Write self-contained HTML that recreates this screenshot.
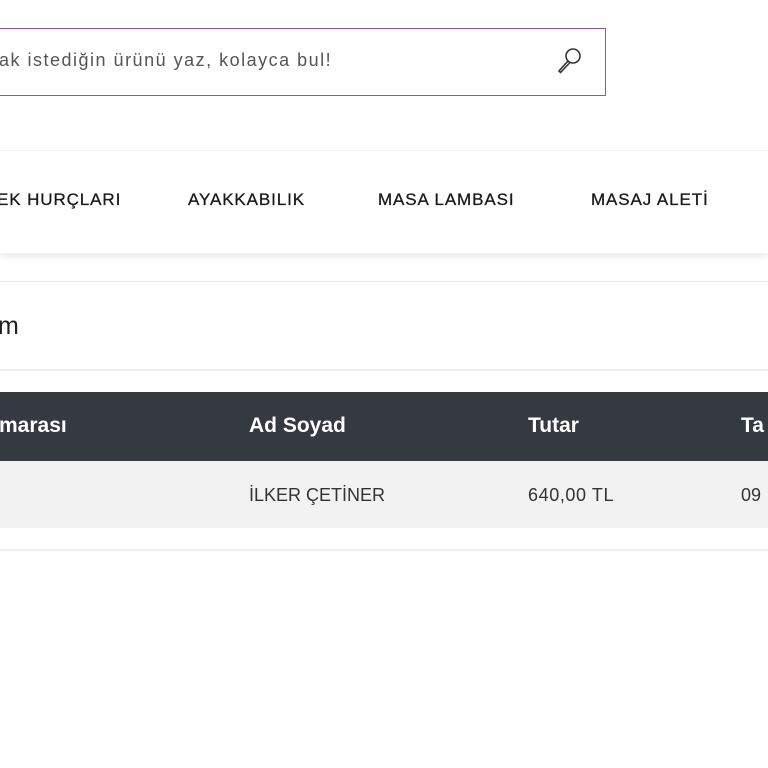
<!DOCTYPE html>
<html><head><meta charset="utf-8"><style>
body{margin:0;width:768px;height:768px;overflow:hidden;background:#fff;font-family:"Liberation Sans",sans-serif;position:relative;color:#222}
.a{position:absolute;white-space:nowrap}
.n{top:190px;font-size:17px;color:#1a1a1a;letter-spacing:0.9px;-webkit-text-stroke:0.3px #1a1a1a}
</style></head><body>
<div class="a" style="left:-10px;top:28px;width:614px;height:66px;border:1px solid #8a5aa8"></div>
<div class="a" style="left:-1px;top:50px;font-size:18px;color:#555;letter-spacing:1.5px">ak istediğin ürünü yaz, kolayca bul!</div>
<svg class="a" style="left:556px;top:45px" width="30" height="30" viewBox="0 0 30 30"><circle cx="17" cy="11" r="7" fill="none" stroke="#333" stroke-width="1.6"/><path d="M12 16 L3 26 L4.5 27.5 L13.5 18" fill="none" stroke="#333" stroke-width="1.6"/></svg>
<div class="a" style="left:0;top:150px;width:768px;height:102px;border-top:1px solid #eee;box-shadow:0 4px 6px rgba(0,0,0,0.08);background:#fff"></div>
<div class="a n" style="left:-3px">EK HURÇLARI</div>
<div class="a n" style="left:188px">AYAKKABILIK</div>
<div class="a n" style="left:378px">MASA LAMBASI</div>
<div class="a n" style="left:591px">MASAJ ALETİ</div>
<div class="a" style="left:0;top:281px;width:768px;height:1px;background:#eaeaea"></div>
<div class="a" style="left:-2px;top:312px;font-size:25px;color:#222">m</div>
<div class="a" style="left:0;top:369px;width:768px;height:2px;background:#ececec"></div>
<div class="a" style="left:0;top:392px;width:768px;height:69px;background:#343a40"></div>
<div class="a" style="left:-1px;top:414px;font-size:21px;font-weight:bold;color:#fff">marası</div>
<div class="a" style="left:249px;top:414px;font-size:21px;font-weight:bold;color:#fff">Ad Soyad</div>
<div class="a" style="left:528px;top:414px;font-size:21px;font-weight:bold;color:#fff">Tutar</div>
<div class="a" style="left:741px;top:414px;font-size:21px;font-weight:bold;color:#fff">Ta</div>
<div class="a" style="left:0;top:461px;width:768px;height:67px;background:#f2f2f2"></div>
<div class="a" style="left:249px;top:485px;font-size:18px;color:#333">İLKER ÇETİNER</div>
<div class="a" style="left:528px;top:485px;font-size:18px;color:#333;letter-spacing:0.6px">640,00 TL</div>
<div class="a" style="left:741px;top:485px;font-size:18px;color:#333">09</div>
<div class="a" style="left:0;top:549px;width:768px;height:2px;background:#f0f0f0"></div>
</body></html>
